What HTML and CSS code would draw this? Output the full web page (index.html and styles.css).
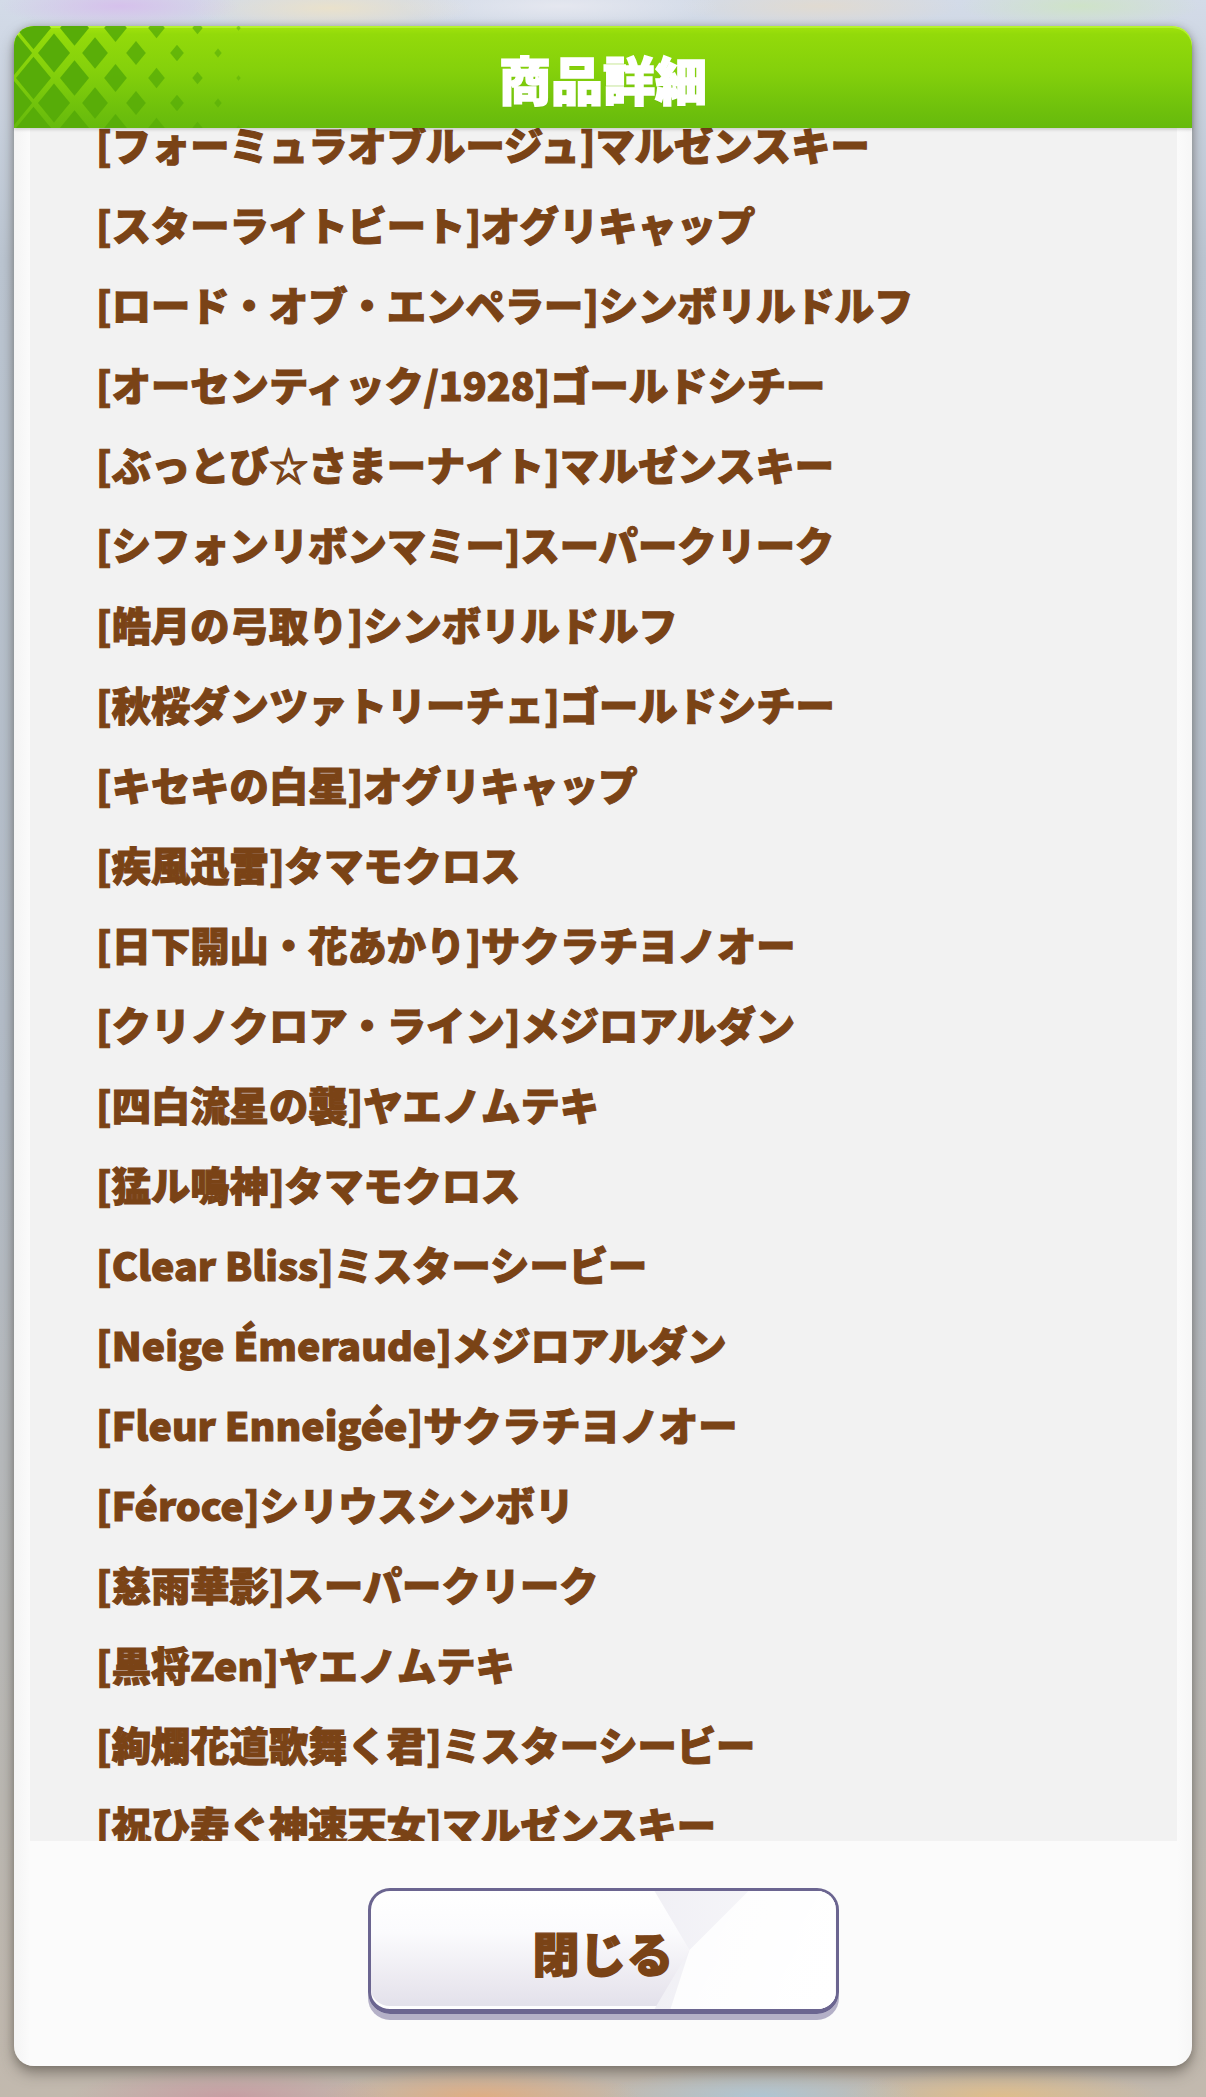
FILE: index.html
```html
<!DOCTYPE html>
<html lang="ja">
<head>
<meta charset="utf-8">
<title>商品詳細</title>
<link rel="stylesheet" href="styles.css">
</head>
<body>
<div class="screen">
  <section class="panel">
    <header class="header">
      <svg class="pattern" width="260" height="102" viewBox="0 0 260 102" aria-hidden="true">
        <defs>
          <path id="dm" d="M0,-1.22 L1,0 L0,1.22 L-1,0 Z"/>
        </defs>
        <g fill="#57ac08">
          <use href="#dm" transform="translate(-1 27) scale(19.1)"/>
          <use href="#dm" transform="translate(40 27) scale(16)"/>
          <use href="#dm" transform="translate(81 27) scale(12.9)" opacity=".95"/>
          <use href="#dm" transform="translate(122 27) scale(9.8)" opacity=".85"/>
          <use href="#dm" transform="translate(163 27) scale(6.8)" opacity=".75"/>
          <use href="#dm" transform="translate(204 27) scale(3.7)" opacity=".6"/>
          <use href="#dm" transform="translate(-1 77) scale(19.1)"/>
          <use href="#dm" transform="translate(40 77) scale(16)"/>
          <use href="#dm" transform="translate(81 77) scale(12.9)" opacity=".95"/>
          <use href="#dm" transform="translate(122 77) scale(9.8)" opacity=".85"/>
          <use href="#dm" transform="translate(163 77) scale(6.8)" opacity=".75"/>
          <use href="#dm" transform="translate(204 77) scale(3.7)" opacity=".6"/>
          <use href="#dm" transform="translate(19.5 2) scale(17.5)"/>
          <use href="#dm" transform="translate(60.5 2) scale(14.5)"/>
          <use href="#dm" transform="translate(101.5 2) scale(11.4)" opacity=".9"/>
          <use href="#dm" transform="translate(142.5 2) scale(8.3)" opacity=".8"/>
          <use href="#dm" transform="translate(183.5 2) scale(5.2)" opacity=".7"/>
          <use href="#dm" transform="translate(224.5 2) scale(2.2)" opacity=".5"/>
          <use href="#dm" transform="translate(19.5 52) scale(17.5)"/>
          <use href="#dm" transform="translate(60.5 52) scale(14.5)"/>
          <use href="#dm" transform="translate(101.5 52) scale(11.4)" opacity=".9"/>
          <use href="#dm" transform="translate(142.5 52) scale(8.3)" opacity=".8"/>
          <use href="#dm" transform="translate(183.5 52) scale(5.2)" opacity=".7"/>
          <use href="#dm" transform="translate(224.5 52) scale(2.2)" opacity=".5"/>
          <use href="#dm" transform="translate(19.5 102) scale(17.5)"/>
          <use href="#dm" transform="translate(60.5 102) scale(14.5)"/>
          <use href="#dm" transform="translate(101.5 102) scale(11.4)" opacity=".9"/>
          <use href="#dm" transform="translate(142.5 102) scale(8.3)" opacity=".8"/>
          <use href="#dm" transform="translate(183.5 102) scale(5.2)" opacity=".7"/>
          <use href="#dm" transform="translate(224.5 102) scale(2.2)" opacity=".5"/>
        </g>
      </svg>
      <h1 class="title">商品詳細</h1>
    </header>
    <div class="list-wrap">
      <ul class="list">
        <li>[フォーミュラオブルージュ]マルゼンスキー</li>
        <li>[スターライトビート]オグリキャップ</li>
        <li>[ロード・オブ・エンペラー]シンボリルドルフ</li>
        <li>[オーセンティック/1928]ゴールドシチー</li>
        <li>[ぶっとび☆さまーナイト]マルゼンスキー</li>
        <li>[シフォンリボンマミー]スーパークリーク</li>
        <li>[皓月の弓取り]シンボリルドルフ</li>
        <li>[秋桜ダンツァトリーチェ]ゴールドシチー</li>
        <li>[キセキの白星]オグリキャップ</li>
        <li>[疾風迅雷]タマモクロス</li>
        <li>[日下開山・花あかり]サクラチヨノオー</li>
        <li>[クリノクロア・ライン]メジロアルダン</li>
        <li>[四白流星の襲]ヤエノムテキ</li>
        <li>[猛ル鳴神]タマモクロス</li>
        <li>[Clear Bliss]ミスターシービー</li>
        <li>[Neige Émeraude]メジロアルダン</li>
        <li>[Fleur Enneigée]サクラチヨノオー</li>
        <li>[Féroce]シリウスシンボリ</li>
        <li>[慈雨華影]スーパークリーク</li>
        <li>[黒将Zen]ヤエノムテキ</li>
        <li>[絢爛花道歌舞く君]ミスターシービー</li>
        <li>[祝ひ寿ぐ神速天女]マルゼンスキー</li>
      </ul>
    </div>
    <footer class="footer">
      <button class="btn" type="button"><span class="btn-label">閉じる</span></button>
    </footer>
  </section>
</div>
</body>
</html>
```
FILE: styles.css
```css
html, body {
  margin: 0;
  padding: 0;
}

body {
  width: 1206px;
  height: 2097px;
  overflow: hidden;
  font-family: "Noto Sans CJK JP", "Noto Sans", sans-serif;
  background:
    radial-gradient(ellipse 120px 22px at 120px 6px, rgba(214, 190, 236, 0.9), transparent),
    radial-gradient(ellipse 140px 24px at 330px 8px, rgba(236, 226, 200, 0.9), transparent),
    radial-gradient(ellipse 160px 22px at 560px 6px, rgba(230, 232, 240, 0.95), transparent),
    radial-gradient(ellipse 140px 22px at 820px 6px, rgba(226, 218, 206, 0.9), transparent),
    radial-gradient(ellipse 120px 22px at 1080px 6px, rgba(206, 228, 196, 0.9), transparent),
    radial-gradient(ellipse 160px 30px at 230px 2097px, rgba(200, 150, 160, 0.8), transparent),
    radial-gradient(ellipse 160px 30px at 480px 2097px, rgba(230, 170, 120, 0.8), transparent),
    radial-gradient(ellipse 160px 30px at 760px 2097px, rgba(170, 200, 220, 0.8), transparent),
    radial-gradient(ellipse 160px 30px at 1000px 2097px, rgba(230, 190, 130, 0.8), transparent),
    linear-gradient(180deg, #d3dbe8 0, #bcc6d2 260px, #b3bcc7 1100px, #bbb8b2 1800px, #c2b9ae 2097px);
}

.screen {
  padding: 26px 14px 0;
}

.panel {
  height: 2040px;
  display: flex;
  flex-direction: column;
  background: linear-gradient(90deg, #f4f4f4 0, #fbfbfb 16px, #fbfbfb calc(100% - 15px), #f6f6f6 100%);
  border-radius: 20px;
  box-shadow: 0 7px 14px rgba(70, 64, 56, 0.5), 0 0 6px rgba(70, 64, 56, 0.25);
}

.header {
  position: relative;
  z-index: 2;
  flex: none;
  height: 102px;
  display: flex;
  align-items: center;
  justify-content: center;
  border-radius: 20px 20px 0 0;
  background: linear-gradient(180deg, #a2e40c 0, #93da0a 8%, #84d00b 45%, #6dbf0c 85%, #66ba0d 100%);
  box-shadow: inset 0 2px 0 rgba(190, 250, 60, 0.7), 0 2px 3px rgba(0, 0, 0, 0.14);
  overflow: hidden;
}

.pattern {
  position: absolute;
  left: 0;
  top: 0;
}

.title {
  position: relative;
  margin: 0;
  padding-top: 4px;
  font-size: 52px;
  font-weight: 900;
  line-height: 1;
  color: #ffffff;
  -webkit-text-stroke: 1.6px #ffffff;
  text-shadow: 0 1px 1px rgba(60, 120, 0, 0.25);
}

.list-wrap {
  flex: none;
  height: 1713px;
  margin: 0 15px 0 16px;
  background: #f2f2f2;
  overflow: hidden;
}

.list {
  margin: -24px 0 0;
  padding: 0 0 0 66px;
  list-style: none;
}

.list li {
  font-size: 39.3px;
  font-weight: 900;
  line-height: 80px;
  color: #7a4316;
  -webkit-text-stroke: 1.1px #7a4316;
  white-space: nowrap;
}

.footer {
  flex: 1;
  display: flex;
  justify-content: center;
  align-items: flex-start;
  padding-top: 47px;
}

.btn {
  position: relative;
  width: 471px;
  height: 126px;
  box-sizing: border-box;
  padding: 0;
  border: 3px solid #6b6590;
  border-bottom-width: 5px;
  border-radius: 22px;
  background: linear-gradient(180deg, #ffffff 0, #fbfbfd 35%, #eceaf1 75%, #e2e0ea 100%);
  box-shadow: 0 6px 0 #b4b0c7, inset 0 -3px 0 rgba(255, 255, 255, 0.95);
  overflow: hidden;
  display: flex;
  align-items: center;
  justify-content: center;
  font-family: "Noto Sans CJK JP", "Noto Sans", sans-serif;
  cursor: pointer;
}

.btn::before {
  content: "";
  position: absolute;
  inset: 0;
  background: linear-gradient(90deg, #e7e6ee 0, #ecebf2 40%, #f9f9fb 100%);
  clip-path: polygon(284px 0, 100% 0, 100% 100%, 284px 100%, 319px 50%);
}

.btn::after {
  content: "";
  position: absolute;
  inset: 0;
  background: linear-gradient(120deg, rgba(255, 255, 255, 0) 0, rgba(255, 255, 255, 0.75) 45%, #ffffff 100%);
  clip-path: polygon(378px 0, 100% 0, 100% 100%, 300px 100%, 319px 50%);
}

.btn-label {
  position: relative;
  z-index: 1;
  font-size: 47px;
  font-weight: 900;
  line-height: 1;
  color: #7a4316;
  -webkit-text-stroke: 1.4px #7a4316;
  padding-top: 2px;
}
```
